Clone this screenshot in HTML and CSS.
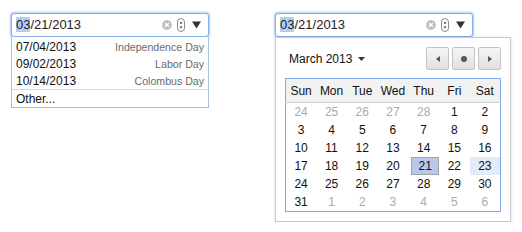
FILE: index.html
```html
<!DOCTYPE html>
<html>
<head>
<meta charset="utf-8">
<link rel="stylesheet" href="styles.css">
</head>
<body>
<div class="page">
  <div class="widget">
    <div class="input">
      <span class="value"><span class="sel">03</span>/21/2013</span>
      <span class="icons">
        <svg class="clear" width="10" height="10" viewBox="0 0 10 10"><circle cx="5" cy="5" r="5" fill="#c2c2c2"/><path d="M3.2 3.2L6.8 6.8M6.8 3.2L3.2 6.8" stroke="#fff" stroke-width="1.4"/></svg>
        <svg class="spin" width="8" height="14" viewBox="0 0 8 14"><rect x="0.5" y="0.5" width="7" height="13" rx="3.5" fill="#fff" stroke="#8a8a8a"/><path d="M2.5 5.5L4 3.5L5.5 5.5Z M2.5 8.5L4 10.5L5.5 8.5Z" fill="#333"/></svg>
        <svg class="drop" width="9" height="8" viewBox="0 0 9 8"><path d="M0 0.5H9L4.5 7.5Z" fill="#333"/></svg>
      </span>
    </div>
    <div class="list">
      <div class="opt"><span class="d">07/04/2013</span><span class="l">Independence Day</span></div>
      <div class="opt"><span class="d">09/02/2013</span><span class="l">Labor Day</span></div>
      <div class="opt"><span class="d">10/14/2013</span><span class="l">Colombus Day</span></div>
      <div class="opt other">Other...</div>
    </div>
  </div>

  <div class="widget">
    <div class="input">
      <span class="value"><span class="sel">03</span>/21/2013</span>
      <span class="icons">
        <svg class="clear" width="10" height="10" viewBox="0 0 10 10"><circle cx="5" cy="5" r="5" fill="#c2c2c2"/><path d="M3.2 3.2L6.8 6.8M6.8 3.2L3.2 6.8" stroke="#fff" stroke-width="1.4"/></svg>
        <svg class="spin" width="8" height="14" viewBox="0 0 8 14"><rect x="0.5" y="0.5" width="7" height="13" rx="3.5" fill="#fff" stroke="#8a8a8a"/><path d="M2.5 5.5L4 3.5L5.5 5.5Z M2.5 8.5L4 10.5L5.5 8.5Z" fill="#333"/></svg>
        <svg class="drop" width="9" height="8" viewBox="0 0 9 8"><path d="M0 0.5H9L4.5 7.5Z" fill="#333"/></svg>
      </span>
    </div>
    <div class="cal">
      <div class="cal-head">
        <span class="month">March 2013 <svg width="7" height="4" viewBox="0 0 7 4"><path d="M0 0H7L3.5 4Z" fill="#333"/></svg></span>
        <span class="navs">
          <span class="btn"><svg width="4" height="6" viewBox="0 0 4 6"><path d="M4 0V6L0 3Z" fill="#555"/></svg></span>
          <span class="btn"><svg width="6" height="6" viewBox="0 0 6 6"><circle cx="3" cy="3" r="3" fill="#555"/></svg></span>
          <span class="btn"><svg width="4" height="6" viewBox="0 0 4 6"><path d="M0 0V6L4 3Z" fill="#555"/></svg></span>
        </span>
      </div>
      <table class="grid">
        <thead>
          <tr><th>Sun</th><th>Mon</th><th>Tue</th><th>Wed</th><th>Thu</th><th>Fri</th><th>Sat</th></tr>
        </thead>
        <tbody>
          <tr><td class="o">24</td><td class="o">25</td><td class="o">26</td><td class="o">27</td><td class="o">28</td><td>1</td><td>2</td></tr>
          <tr><td>3</td><td>4</td><td>5</td><td>6</td><td>7</td><td>8</td><td>9</td></tr>
          <tr><td>10</td><td>11</td><td>12</td><td>13</td><td>14</td><td>15</td><td>16</td></tr>
          <tr><td>17</td><td>18</td><td>19</td><td>20</td><td class="cur"><span>21</span></td><td>22</td><td class="hov">23</td></tr>
          <tr><td>24</td><td>25</td><td>26</td><td>27</td><td>28</td><td>29</td><td>30</td></tr>
          <tr><td>31</td><td class="o">1</td><td class="o">2</td><td class="o">3</td><td class="o">4</td><td class="o">5</td><td class="o">6</td></tr>
        </tbody>
      </table>
    </div>
  </div>
</div>
</body>
</html>
```

FILE: styles.css
```css
html, body { margin: 0; padding: 0; background: #fff; }
body { font-family: "Liberation Sans", Arial, sans-serif; color: #111; }
.page { display: flex; align-items: flex-start; gap: 66px; padding: 13px 0 0 11px; }
.widget { width: 198px; display: flex; flex-direction: column; }
.input {
  box-sizing: border-box; height: 24px; display: flex; align-items: center;
  justify-content: space-between;
  border: 1px solid #86aeea; border-radius: 3px;
  box-shadow: 0 0 2px 1px rgba(110, 160, 235, 0.55);
  padding: 0 7px 0 4px; background: #fff;
}
.value { font-size: 13px; color: #222; line-height: 14px; }
.value .sel { background: #b4cef3; }
.icons { display: flex; align-items: center; }
.clear { margin-right: 5px; }
.spin { margin-right: 7px; }
.list {
  box-sizing: border-box; border: 1px solid #a9bedb; border-top: none;
  padding-top: 1px; background: #fff;
}
.opt { height: 17px; display: flex; align-items: center; justify-content: space-between; padding: 0 4px; font-size: 12px; }
.opt .l { font-size: 10.6px; color: #6a6a6a; }
.other { border-top: 1px solid #d8d8d8; }
.cal {
  box-sizing: border-box; width: 236px; margin-top: 0;
  border: 1px solid #c8c8c8; background: #fff;
  box-shadow: 0 1px 3px rgba(0,0,0,0.15);
  padding: 9px 9px 9px 9px;
}
.cal-head { display: flex; justify-content: space-between; align-items: center; height: 23px; margin-bottom: 8px; }
.month { font-size: 12px; padding-left: 4px; display: flex; align-items: center; gap: 6px; }
.navs { display: flex; gap: 3px; }
.btn {
  box-sizing: border-box; width: 23px; height: 23px; display: flex; align-items: center; justify-content: center;
  border: 1px solid #c4c4c4; border-radius: 2px;
  background: linear-gradient(#f6f6f6, #e0e0e0);
}
.grid { width: 216px; border-collapse: collapse; border: 1px solid #7fa8ee; table-layout: fixed; font-size: 12px; }
.grid th { height: 23px; background: #f2f2f2; border-bottom: 1px solid #cfcfcf; font-weight: normal; padding: 0; color: #111; }
.grid td { height: 18px; padding: 0; text-align: center; color: #111; }
.grid td.o { color: #aaa; }
.grid td.hov { background: #e3eaf8; }
.grid td.cur span { display: block; margin-left: 3px; height: 16px; line-height: 16px; background: #b8c8ea; border: 1px solid #a3a3a3; }
```
